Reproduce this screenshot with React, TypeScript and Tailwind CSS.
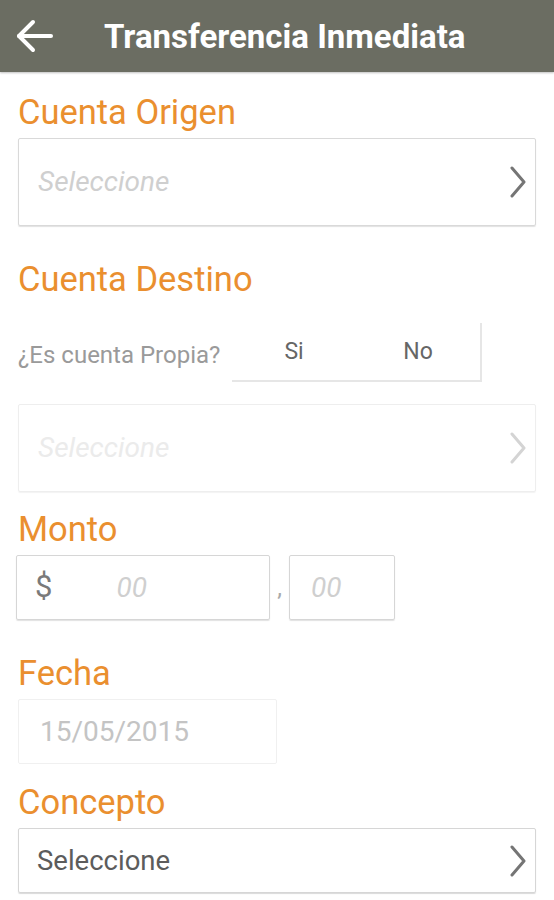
import React from "react";

const font = { fontFamily: "Roboto, 'Noto Sans', sans-serif" };

function Chevron({ faded = false }: { faded?: boolean }) {
  return (
    <svg width="18" height="32" viewBox="0 0 18 32" fill="none">
      <polyline
        points="3,2 15,16 3,30"
        stroke={faded ? "#d4d4d4" : "#757575"}
        strokeWidth="3"
        strokeLinecap="round"
        strokeLinejoin="round"
      />
    </svg>
  );
}

function Label({ children, className = "" }: { children: React.ReactNode; className?: string }) {
  return <div className={`text-[34.5px] leading-[32px] text-[#ea8f2f] ${className}`}>{children}</div>;
}

export default function App() {
  return (
    <div style={font} className="min-h-screen w-[554px] bg-white">
      {/* Toolbar */}
      <header className="flex h-[72px] items-center bg-[#6b6d62] shadow-[0_1px_2px_rgba(0,0,0,0.25)]">
        <div className="ml-[15px] w-[40px]">
          <svg width="38" height="34" viewBox="0 0 38 34" fill="none">
            <line x1="4" y1="17" x2="36" y2="17" stroke="white" strokeWidth="4" strokeLinecap="round" />
            <polyline points="18,3 4,17 18,31" stroke="white" strokeWidth="4" strokeLinecap="round" strokeLinejoin="round" />
          </svg>
        </div>
        <h1 className="ml-[49px] pt-[2px] text-[33px] font-bold text-white">Transferencia Inmediata</h1>
      </header>

      <main className="px-[18px]">
        <Label className="mt-[24px]">Cuenta Origen</Label>
        <div className="mt-[10px] flex h-[88px] items-center justify-between rounded-[2px] border border-[#d9d9d9] pl-[19px] pr-[8px] shadow-[0_1px_1px_rgba(0,0,0,0.12)]">
          <span className="text-[28px] italic text-[#cfcfcf]">Seleccione</span>
          <Chevron />
        </div>

        <Label className="mt-[37px]">Cuenta Destino</Label>
        <div className="mt-[28px] flex h-[59px] items-center">
          <span className="w-[214px] shrink-0 pt-[4px] text-[24px] text-[#9a9a9a]">¿Es cuenta Propia?</span>
          <div className="flex h-full w-[250px] border-r-2 border-b-2 border-[#e6e6e6] text-[23px] text-[#666666]">
            <div className="flex flex-1 justify-center pt-[12px]">Si</div>
            <div className="flex flex-1 justify-center pt-[12px]">No</div>
          </div>
        </div>
        <div className="mt-[22px] flex h-[88px] items-center justify-between rounded-[2px] border border-[#eeeeee] pl-[19px] pr-[8px] shadow-[0_1px_1px_rgba(0,0,0,0.05)]">
          <span className="text-[28px] italic text-[#ebebeb]">Seleccione</span>
          <Chevron faded />
        </div>

        <Label className="mt-[21px]">Monto</Label>
        <div className="mt-[10px] -ml-[2px] flex h-[65px] items-stretch">
          <div className="flex w-[254px] items-center rounded-[2px] border border-[#d6d6d6] pl-[18px] shadow-[0_1px_1px_rgba(0,0,0,0.12)]">
            <span className="text-[31px] text-[#7a7a7a]">$</span>
            <span className="ml-[64px] text-[28px] italic text-[#cfcfcf]">00</span>
          </div>
          <span className="flex w-[19px] items-end justify-center pb-[14px] text-[24px] text-[#aaaaaa]">,</span>
          <div className="flex w-[106px] items-center rounded-[2px] border border-[#d6d6d6] pl-[21px] shadow-[0_1px_1px_rgba(0,0,0,0.12)]">
            <span className="text-[28px] italic text-[#cfcfcf]">00</span>
          </div>
        </div>

        <Label className="mt-[37px]">Fecha</Label>
        <div className="mt-[10px] flex h-[65px] w-[259px] items-center rounded-[2px] border border-[#f0f0f0] pl-[21px]">
          <span className="text-[28px] text-[#c4c4c4]">15/05/2015</span>
        </div>

        <Label className="mt-[22px]">Concepto</Label>
        <div className="mt-[10px] flex h-[65px] items-center justify-between rounded-[2px] border border-[#d6d6d6] pl-[18px] pr-[8px] shadow-[0_1px_1px_rgba(0,0,0,0.15)]">
          <span className="text-[27.5px] text-[#5c5c5c]">Seleccione</span>
          <Chevron />
        </div>
      </main>
    </div>
  );
}
